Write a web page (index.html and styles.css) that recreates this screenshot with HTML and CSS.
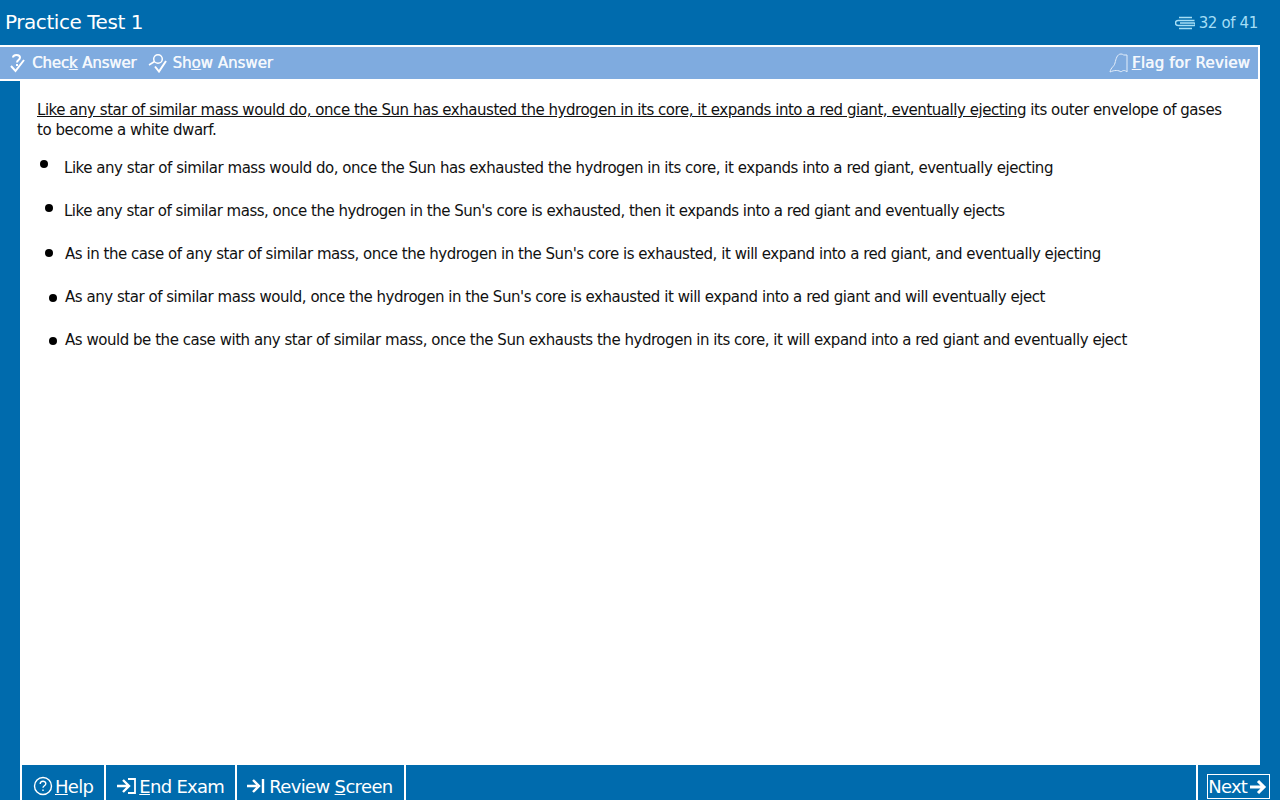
FILE: index.html
```html
<!DOCTYPE html>
<html lang="en">
<head>
<meta charset="utf-8">
<title>Practice Test 1</title>
<link rel="stylesheet" href="styles.css">
</head>
<body>
<div class="app">
  <header class="titlebar">
    <h1 class="title">Practice Test 1</h1>
    <div class="counter">
      <svg class="clip" width="20" height="14" viewBox="0 0 20 14" fill="none" stroke="#a5def5" stroke-width="1.5"><path d="M4 1.500h13M4 12.500h13"/><path d="M19.500 4.500H3a2.300 2.300 0 0 0 0 5h16a1.200 1.200 0 0 0 0-2.500H5"/></svg>
      <span>32 of 41</span>
    </div>
  </header>
  <div class="toolbar-wrap">
    <nav class="toolbar">
      <span class="tool">
        <svg width="18" height="20" viewBox="0 0 18 20" fill="none" stroke="#fff" stroke-width="2"><path d="M3 4.500C3 1 10 1 10 4.500 10 7 7 7 7 9.500"/><path d="M7 11v2"/><path d="M1 13l4.500 5L14 7"/></svg>
        <span>Chec<u>k</u> Answer</span>
      </span>
      <span class="tool show">
        <svg width="20" height="20" viewBox="0 0 20 20" fill="none" stroke="#fff" stroke-width="1.500"><circle cx="10" cy="6" r="4.300"/><path d="M6.500 8.500L1 12"/><path d="M7 13.500l4 5L18 8" stroke-width="2"/></svg>
        <span>Sh<u>o</u>w Answer</span>
      </span>
      <span class="tool flag">
        <svg width="20" height="22" viewBox="0 0 20 22" fill="none" stroke="#e4eefa" stroke-width="1"><path d="M1 20c1-5 4-5 5-9 1-4 2-9 6-9 2 0 2 1 3 1h3v17c-2-2-4-2-6 0-2-2-7-2-11 0z"/></svg>
        <span><u>F</u>lag for Review</span>
      </span>
    </nav>
  </div>
  <div class="middle">
    <div class="side-left"></div>
    <main class="content">
      <p class="question"><u>Like any star of similar mass would do, once the Sun has exhausted the hydrogen in its core, it expands into a red giant, eventually ejecting</u> its outer envelope of gases to become a white dwarf.</p>
      <ul class="choices">
        <li class="choice c1"><i class="dot"></i><span>Like any star of similar mass would do, once the Sun has exhausted the hydrogen in its core, it expands into a red giant, eventually ejecting</span></li>
        <li class="choice c2"><i class="dot"></i><span>Like any star of similar mass, once the hydrogen in the Sun's core is exhausted, then it expands into a red giant and eventually ejects</span></li>
        <li class="choice c3"><i class="dot"></i><span>As in the case of any star of similar mass, once the hydrogen in the Sun's core is exhausted, it will expand into a red giant, and eventually ejecting</span></li>
        <li class="choice c4"><i class="dot"></i><span>As any star of similar mass would, once the hydrogen in the Sun's core is exhausted it will expand into a red giant and will eventually eject</span></li>
        <li class="choice c5"><i class="dot"></i><span>As would be the case with any star of similar mass, once the Sun exhausts the hydrogen in its core, it will expand into a red giant and eventually eject</span></li>
      </ul>
    </main>
    <div class="side-right"></div>
  </div>
  <footer class="footer">
    <div class="btn">
      <svg width="20" height="20" viewBox="0 0 20 20" fill="none" stroke="#fff" stroke-width="1.400"><circle cx="10" cy="10" r="8.500"/><path d="M7.200 8c0-3.600 5.600-3.600 5.600-.2 0 2-2.800 2-2.800 4"/><path d="M10 13.500v1.500"/></svg>
      <span><u>H</u>elp</span>
    </div>
    <div class="btn">
      <svg width="20" height="18" viewBox="0 0 20 18" fill="none" stroke="#fff" stroke-width="2.400"><path d="M0 9h11M6 3l6 6-6 6"/><path d="M11 2h7v14h-7" stroke-width="1.800"/></svg>
      <span><u>E</u>nd Exam</span>
    </div>
    <div class="btn rev">
      <svg width="18" height="16" viewBox="0 0 18 16" fill="none" stroke="#fff" stroke-width="2.400"><path d="M0 8h10M6 2l6 6-6 6"/><path d="M16 1v14"/></svg>
      <span>Review <u>S</u>creen</span>
    </div>
    <div class="spacer"></div>
    <div class="btn next">
      <span class="next-box">Next
        <svg width="17" height="16" viewBox="0 0 17 16" fill="none" stroke="#fff" stroke-width="3"><path d="M0 8h14M8 2l6 6-6 6"/></svg>
      </span>
    </div>
  </footer>
</div>
</body>
</html>
```
FILE: styles.css
```css
* { box-sizing: border-box; }
html, body { margin: 0; padding: 0; }
body {
  width: 1280px;
  height: 800px;
  overflow: hidden;
  background: #006bad;
  font-family: "DejaVu Sans", sans-serif;
}
.app { width: 1280px; height: 800px; display: flex; flex-direction: column; }
.titlebar {
  height: 45px;
  flex: none;
  display: flex;
  justify-content: space-between;
  align-items: center;
  padding: 0 22px 0 5px;
  background: #006bad;
}
.title { margin: 0 0 2px; color: #fff; font-size: 20px; font-weight: 400; letter-spacing: -0.45px; }
.counter { display: flex; align-items: center; gap: 4px; color: #a5def5; font-size: 15px; letter-spacing: -0.35px; }
.toolbar-wrap { flex: none; height: 36px; width: 1260px; background: #fff; padding: 2px 2px 2px 0; }
.toolbar {
  height: 32px;
  background: #7fabdf;
  display: flex;
  align-items: center;
  padding: 0 8px 0 10px;
  color: #f4f8fd;
  font-size: 15px;
}
.tool { display: flex; align-items: center; gap: 4px; letter-spacing: -0.15px; text-shadow: 0.4px 0 0 currentColor; }
.show { margin-left: 12px; letter-spacing: 0; }
.flag { margin-left: auto; gap: 3px; letter-spacing: 0.2px; text-shadow: 0.6px 0 0 currentColor; }
.middle { flex: 1; display: flex; min-height: 0; }
.side-left { width: 20px; background: #006bad; }
.content { width: 1240px; background: #fff; padding: 21px 30px 0 17px; color: #111; font-size: 15px; letter-spacing: -0.465px; line-height: 20px; margin-top: -2px; }
.side-right { width: 20px; background: #006bad; }
.question { margin: 0; }
.choices { list-style: none; margin: 0; padding: 0; }
.choice { display: flex; height: 43px; align-items: center; }
.choice:first-child { margin-top: 6px; }
.dot { display: block; width: 8px; height: 8px; border-radius: 50%; background: #000; flex: none; }
.c1 .dot { margin: 0 16px 8px 3px; }
.c2 .dot { margin: 0 11px 6px 8px; }
.c2 span { letter-spacing: -0.5px; }
.c3 .dot { margin: 0 12px 2px 8px; }
.c4 .dot { margin: 2px 8px 0 12px; }
.c5 .dot { margin: 2px 8px 0 12px; }
.footer { flex: none; height: 35px; display: flex; background: #006bad; padding-left: 20px; color: #fff; font-size: 18px; }
.btn { display: flex; align-items: center; gap: 2px; border-left: 2px solid #fff; padding: 7px 11px 0; letter-spacing: -0.7px; }
.rev { letter-spacing: -0.65px; }
.rev svg { margin: 0 2px 0 -1px; }
.spacer { flex: 1; border-left: 2px solid #fff; }
.next { padding: 8px 10px 0 9px; }
.next-box { display: flex; align-items: center; gap: 3px; border: 1px solid #fff; height: 25px; padding-right: 2px; letter-spacing: -0.8px; }
```
